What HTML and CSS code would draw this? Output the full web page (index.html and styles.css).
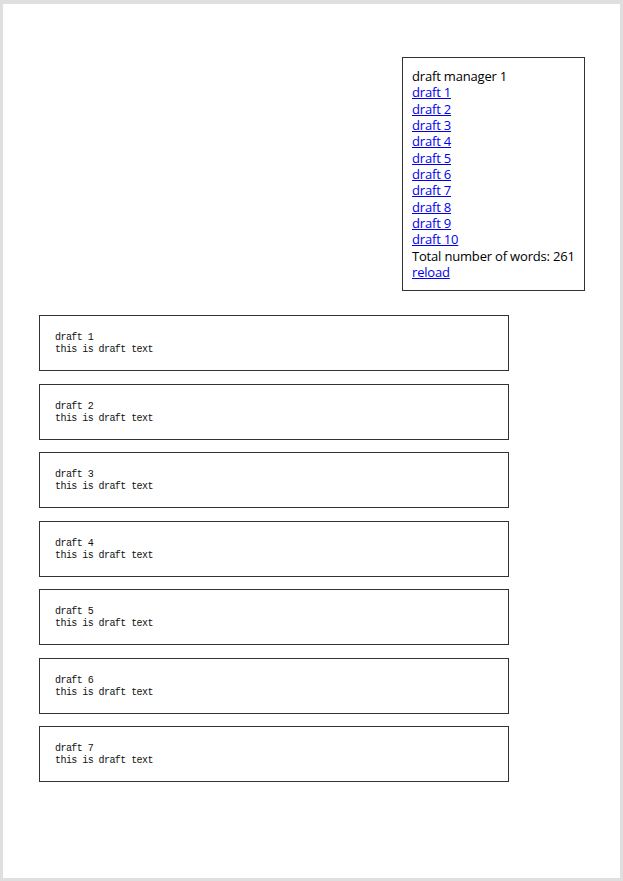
FILE: index.html
```html
<!DOCTYPE html>
<html>
<head>
<meta charset="utf-8">
<link rel="stylesheet" href="styles.css">
</head>
<body>
<div class="page">
  <div class="manager">
    <div>draft manager 1</div>
    <a href="#">draft 1</a>
    <a href="#">draft 2</a>
    <a href="#">draft 3</a>
    <a href="#">draft 4</a>
    <a href="#">draft 5</a>
    <a href="#">draft 6</a>
    <a href="#">draft 7</a>
    <a href="#">draft 8</a>
    <a href="#">draft 9</a>
    <a href="#">draft 10</a>
    <div>Total number of words: 261</div>
    <a href="#">reload</a>
  </div>
  <div class="drafts">
    <div class="draft"><div>draft 1</div><div>this is draft text</div></div>
    <div class="draft"><div>draft 2</div><div>this is draft text</div></div>
    <div class="draft"><div>draft 3</div><div>this is draft text</div></div>
    <div class="draft"><div>draft 4</div><div>this is draft text</div></div>
    <div class="draft"><div>draft 5</div><div>this is draft text</div></div>
    <div class="draft"><div>draft 6</div><div>this is draft text</div></div>
    <div class="draft"><div>draft 7</div><div>this is draft text</div></div>
  </div>
</div>
</body>
</html>
```
FILE: styles.css
```css
html, body {
  margin: 0;
  padding: 0;
  background: #dfdfdf;
}
.page {
  margin: 4px 3px 3px 3px;
  height: 874px;
  background: #fff;
  box-sizing: border-box;
  padding: 53px 35px 0 36px;
}
.manager {
  width: 183px;
  margin-left: auto;
  box-sizing: border-box;
  border: 1px solid #333;
  padding: 10px 8px 10px 9px;
  font-family: "Open Sans", sans-serif;
  font-size: 13px;
  letter-spacing: -0.18px;
  line-height: 16.33px;
  color: #000;
  white-space: nowrap;
  display: flex;
  flex-direction: column;
  align-items: flex-start;
}
.manager a {
  color: #0000ee;
  text-decoration: underline;
}
.drafts {
  margin-top: 24px;
  width: 470px;
  display: flex;
  flex-direction: column;
  gap: 12.5px;
}
.draft {
  height: 56px;
  box-sizing: border-box;
  border: 1px solid #333;
  padding: 16px 15px 0 15px;
  font-family: "Liberation Mono", monospace;
  font-size: 10px;
  letter-spacing: -0.56px;
  line-height: 12px;
  color: #111;
}
```
